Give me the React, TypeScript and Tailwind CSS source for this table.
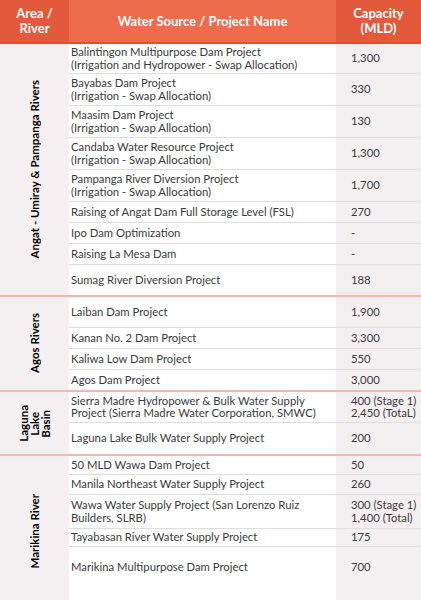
import React from 'react';

type Row = { name: string[]; cap: string[]; h: string; top?: boolean };
type Group = { label: string[]; rows: Row[] };

const groups: Group[] = [
  {
    label: ['Angat - Umiray & Pampanga Rivers'],
    rows: [
      { name: ['Balintingon Multipurpose Dam Project', '(Irrigation and Hydropower - Swap Allocation)'], cap: ['1,300'], h: 'h-[30px]' },
      { name: ['Bayabas Dam Project', '(Irrigation - Swap Allocation)'], cap: ['330'], h: 'h-[32px]' },
      { name: ['Maasim Dam Project', '(Irrigation - Swap Allocation)'], cap: ['130'], h: 'h-[32px]' },
      { name: ['Candaba Water Resource Project', '(Irrigation - Swap Allocation)'], cap: ['1,300'], h: 'h-[32px]' },
      { name: ['Pampanga River Diversion Project', '(Irrigation - Swap Allocation)'], cap: ['1,700'], h: 'h-[32px]' },
      { name: ['Raising of Angat Dam Full Storage Level (FSL)'], cap: ['270'], h: 'h-[21px]' },
      { name: ['Ipo Dam Optimization'], cap: ['-'], h: 'h-[21px]' },
      { name: ['Raising La Mesa Dam'], cap: ['-'], h: 'h-[21px]' },
      { name: ['Sumag River Diversion Project'], cap: ['188'], h: 'h-[30px]' },
    ],
  },
  {
    label: ['Agos Rivers'],
    rows: [
      { name: ['Laiban Dam Project'], cap: ['1,900'], h: 'h-[31px]' },
      { name: ['Kanan No. 2 Dam Project'], cap: ['3,300'], h: 'h-[21px]' },
      { name: ['Kaliwa Low Dam Project'], cap: ['550'], h: 'h-[21px]' },
      { name: ['Agos Dam Project'], cap: ['3,000'], h: 'h-[20px]' },
    ],
  },
  {
    label: ['Laguna', 'Lake', 'Basin'],
    rows: [
      { name: ['Sierra Madre Hydropower & Bulk Water Supply', 'Project (Sierra Madre Water Corporation, SMWC)'], cap: ['400 (Stage 1)', '2,450 (TotaL)'], h: 'h-[31px]' },
      { name: ['Laguna Lake Bulk Water Supply Project'], cap: ['200'], h: 'h-[31px]' },
    ],
  },
  {
    label: ['Marikina River'],
    rows: [
      { name: ['50 MLD Wawa Dam Project'], cap: ['50'], h: 'h-[19px]' },
      { name: ['Manila Northeast Water Supply Project'], cap: ['260'], h: 'h-[20px]' },
      { name: ['Wawa Water Supply Project (San Lorenzo Ruiz', 'Builders, SLRB)'], cap: ['300 (Stage 1)', '1,400 (Total)'], h: 'h-[34px]' },
      { name: ['Tayabasan River Water Supply Project'], cap: ['175'], h: 'h-[18px]' },
      { name: ['Marikina Multipurpose Dam Project'], cap: ['700'], h: 'h-[60px]', top: true },
    ],
  },
];

export default function App() {
  return (
    <div className="w-[421px] h-[600px] overflow-hidden bg-white text-[#3a3a3a] font-['Lato','Liberation_Sans',sans-serif]">
      {/* header */}
      <div className="flex h-[44px] border-b-2 border-[#f04b22] text-white font-bold text-[13px] leading-[15px] text-center">
        <div className="w-[69px] bg-[#e2593b] flex items-center justify-center">
          Area /<br />River
        </div>
        <div className="w-[267px] bg-[#ee6b4b] flex items-center justify-center">
          Water Source / Project Name
        </div>
        <div className="flex-1 bg-[#e2593b] flex items-center justify-center">
          Capacity<br />(MLD)
        </div>
      </div>

      {groups.map((g, gi) => (
        <div key={gi} className={`flex ${gi > 0 ? 'border-t-2 border-[#f6b6aa]' : ''}`}>
          <div className="w-[69px] bg-[#f4f0f1] flex items-center justify-center">
            <div className="[writing-mode:vertical-rl] rotate-180 text-black font-bold text-[11.5px] leading-[11px] text-center">
              {g.label.map((l, i) => (
                <div key={i}>{l}</div>
              ))}
            </div>
          </div>
          <div className="flex-1 flex flex-col">
            {g.rows.map((r, ri) => (
              <div
                key={ri}
                className={`flex ${r.h} ${ri < g.rows.length - 1 ? 'border-b border-[#dedcdc]' : ''} text-[11.3px] leading-[12.5px]`}
              >
                <div className={`w-[267px] bg-white pl-[2px] flex flex-col ${r.top ? 'pt-[14px]' : 'justify-center'}`}>
                  {r.name.map((n, i) => (
                    <div key={i} className="whitespace-nowrap">{n}</div>
                  ))}
                </div>
                <div className={`flex-1 bg-[#f3eff1] pl-[15px] flex flex-col ${r.top ? 'pt-[14px]' : 'justify-center'}`}>
                  {r.cap.map((c, i) => (
                    <div key={i} className="whitespace-nowrap">{c}</div>
                  ))}
                </div>
              </div>
            ))}
          </div>
        </div>
      ))}
    </div>
  );
}
